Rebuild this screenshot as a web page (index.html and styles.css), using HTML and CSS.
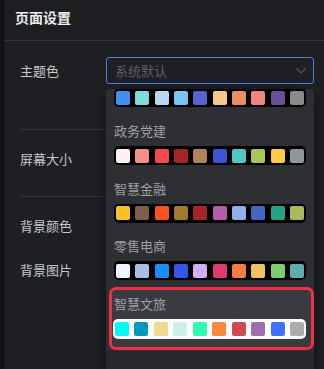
FILE: index.html
```html
<!DOCTYPE html>
<html lang="zh-CN">
<head>
    <meta charset="UTF-8">
    <meta name="viewport" content="width=device-width, initial-scale=1.0">
    <title>页面设置</title>
    <link rel="stylesheet" href="styles.css">
</head>
<body>
    <div class="edge"></div>
    <div class="panel">
        <div class="panel-header">页面设置</div>

        <div class="form-row row-theme">
            <span class="form-label">主题色</span>
            <div class="select-wrap">
                <div class="select">
                    <span class="placeholder">系统默认</span>
                    <svg class="chevron" width="10" height="6" viewBox="0 0 10 6" fill="none" stroke="currentColor" stroke-width="1.2">
                        <path d="M0.5 0.5 L5 5 L9.5 0.5"></path>
                    </svg>
                </div>
                <div class="dropdown">
                    <div class="theme-list" id="themeList"></div>
                </div>
            </div>
        </div>

        <div class="form-row row-size">
            <span class="form-label">屏幕大小</span>
        </div>
        <div class="form-row row-plain">
            <span class="form-label">背景颜色</span>
        </div>
        <div class="form-row row-plain">
            <span class="form-label">背景图片</span>
        </div>
    </div>

    <script>
        // theme palettes shown in the dropdown (first one is scrolled past its name)
        const themes = [
            { name: '', colors: ['#3f8ff2', '#80dcd8', '#b9d7f3', '#75c6f2', '#5763d2', '#f7c987', '#e98f5f', '#f28383', '#6a4f9b', '#8a8a8a'] },
            { name: '政务党建', colors: ['#fff1f1', '#f48f8f', '#f54a4a', '#a42525', '#b1825a', '#3b56d2', '#50c7c3', '#a9c758', '#fecb46', '#8d9999'] },
            { name: '智慧金融', colors: ['#fec122', '#7c5f49', '#fc5222', '#a17b29', '#a52525', '#b55da9', '#92afe9', '#4565c5', '#23a585', '#abb959'] },
            { name: '零售电商', colors: ['#eff3fd', '#a9bde5', '#1b8df9', '#3357e9', '#d5adf5', '#dd3b6d', '#f57d45', '#f3c15d', '#7dcd75', '#5dadb1'] },
            { name: '智慧文旅', colors: ['#00fbfb', '#0099c1', '#f1d991', '#cdefe9', '#31fbb1', '#fc8939', '#d14951', '#a16db1', '#3b73fd', '#ababab'], active: true }
        ];

        const list = document.getElementById('themeList');
        themes.forEach(theme => {
            const item = document.createElement('div');
            item.className = 'theme-item' + (theme.active ? ' is-hover' : '');

            const label = document.createElement('div');
            label.className = 'theme-name';
            label.textContent = theme.name;

            const strip = document.createElement('div');
            strip.className = 'swatches';
            theme.colors.forEach(c => {
                const sw = document.createElement('span');
                sw.className = 'swatch';
                sw.style.background = c;
                strip.appendChild(sw);
            });

            item.appendChild(label);
            item.appendChild(strip);
            list.appendChild(item);
        });
    </script>
</body>
</html>
```

FILE: styles.css
```css
:root {
    --panel-bg: #1e1f22;
    --line: #333438;
    --menu-bg: #2e2f33;
    --menu-hover: #3a3b40;
    --label: #c6c7ca;
    --muted: #9d9fa4;
    --blue: #4a80e6;
    --red: #ec3244;
}

* {
    margin: 0;
    padding: 0;
    box-sizing: border-box;
}

body {
    font-family: "Noto Sans CJK SC", "Noto Sans", sans-serif;
    background-color: var(--panel-bg);
    color: var(--label);
    height: 100vh;
    display: flex;
    overflow: hidden;
}

.edge {
    width: 4px;
    background-color: #151517;
    border-right: 1px solid #0c0c0d;
    flex-shrink: 0;
}

.panel {
    flex: 1;
    display: flex;
    flex-direction: column;
}

.panel-header {
    height: 41px;
    line-height: 34px;
    padding-left: 11px;
    font-size: 14px;
    font-weight: 700;
    color: #ececec;
    border-bottom: 1px solid var(--line);
}

.form-row {
    display: flex;
    align-items: flex-start;
    margin: 0 10px 0 16px;
    font-size: 13px;
}

.form-label {
    width: 86px;
    flex-shrink: 0;
    line-height: 20px;
}

.row-theme {
    height: 89px;
    padding-top: 16px;
    border-bottom: 1px solid var(--line);
}

.row-theme .form-label {
    line-height: 27px;
}

.row-size {
    height: 67px;
    padding-top: 19px;
    border-bottom: 1px solid var(--line);
}

.row-plain {
    height: 44px;
    padding-top: 19px;
}

.select-wrap {
    flex: 1;
    position: relative;
}

.select {
    height: 27px;
    border: 1px solid var(--blue);
    border-radius: 3px;
    background-color: #1f2023;
    display: flex;
    align-items: center;
    justify-content: space-between;
    padding: 0 7px 0 8px;
}

.placeholder {
    color: #5d5f64;
    font-size: 13px;
}

.chevron {
    color: #56585d;
}

/* open dropdown, scrolled a little */
.dropdown {
    position: absolute;
    top: 32px;
    left: 0;
    width: 100%;
    height: 290px;
    background: linear-gradient(var(--menu-bg) 262px, #27282b 262px);
    border-radius: 4px;
    box-shadow: 0 4px 12px rgba(0, 0, 0, 0.4);
    overflow: hidden;
    padding: 0 3px 0 6px;
    z-index: 10;
}

.theme-list {
    margin-top: -29.6px;
}

.theme-item {
    height: 57.6px;
    padding: 4px 5px 0 2px;
    border-radius: 4px;
}

.theme-item.is-hover {
    background-color: var(--menu-hover);
    outline: 3px solid var(--red);
}

.theme-name {
    font-size: 13px;
    height: 20px;
    line-height: 20px;
    color: var(--muted);
    margin-bottom: 5px;
}

.swatches {
    height: 19px;
    background-color: #000;
    border-radius: 5px;
    display: flex;
    align-items: center;
    justify-content: space-between;
    padding: 0 2px;
}

.is-hover .swatches {
    height: 20px;
    background-color: #fff;
    margin-left: -1px;
}

.swatch {
    width: 14px;
    height: 14px;
    border-radius: 2px;
}
```
